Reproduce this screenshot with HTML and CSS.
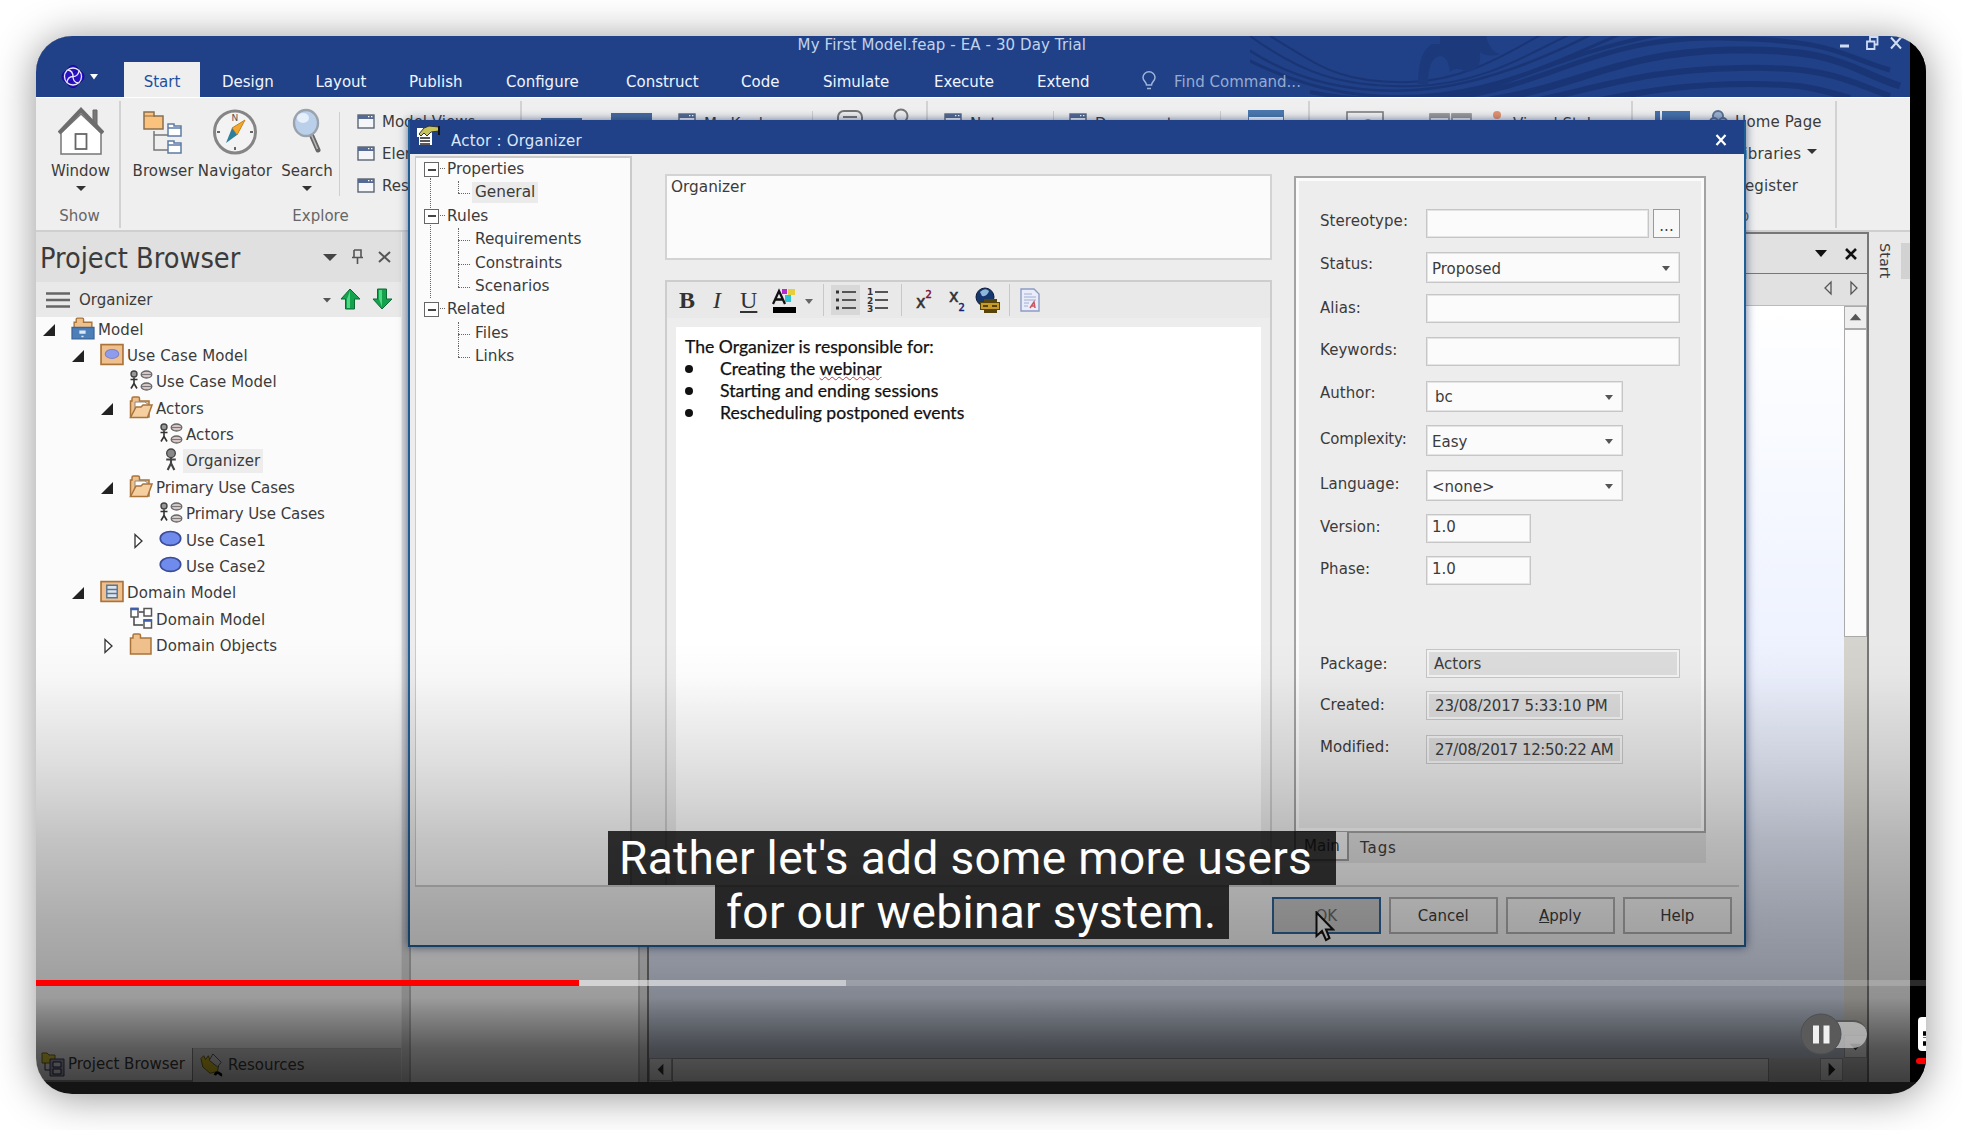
FILE: index.html
```html
<!DOCTYPE html>
<html lang="en">
<head>
<meta charset="utf-8">
<title>My First Model.feap - EA - 30 Day Trial</title>
<link rel="stylesheet" href="styles.css">
</head>
<body>
<svg class="defs" width="0" height="0">
  <symbol id="i-win" viewBox="0 0 18 15"><rect x="1" y="1" width="16" height="13" fill="#f4f6fa" stroke="#5d6573" stroke-width="1.4"/><rect x="1" y="1" width="16" height="4" fill="#546a92"/><path d="M11 2.6h1.4M14 2.6h1.4" stroke="#fff" stroke-width="1.4"/></symbol>
  <symbol id="i-open" viewBox="0 0 12 12"><path d="M0 12L12 0V12Z" fill="#222"/></symbol>
  <symbol id="i-closed" viewBox="0 0 12 16"><path d="M2 1.5V14.5L9 8Z" fill="#fff" stroke="#333" stroke-width="1.3"/></symbol>
  <symbol id="i-root" viewBox="0 0 23 22"><path d="M3 11V5H5V2Q5 1 6 1H11Q12 1 12 2V5H20V11Z" fill="#f0c08a" stroke="#a9743a" stroke-width="1.3"/><path d="M1 10H22V21H1Z" fill="#4c7fb8" stroke="#3a669b" stroke-width="1.3"/><path d="M8 13h6v3H8zM10 18h2v1.5h-2z" fill="#dfe9f5"/></symbol>
  <symbol id="i-ucm" viewBox="0 0 23 22"><rect x="1" y="1.5" width="21" height="19" fill="#efbf8e" stroke="#a9743a" stroke-width="1.6"/><ellipse cx="11.500" cy="10.500" rx="6.500" ry="4.300" fill="#8d9cec" stroke="#7d83c4"/></symbol>
  <symbol id="i-dom" viewBox="0 0 23 22"><rect x="1" y="1.500" width="21" height="19" fill="#efbf8e" stroke="#a9743a" stroke-width="1.6"/><path d="M6.500 5h10v12h-10zM6.500 9h10M6.500 13h10" fill="#dbe5f0" stroke="#5b7590" stroke-width="1.400"/></symbol>
  <symbol id="i-diag" viewBox="0 0 24 22"><circle cx="5" cy="4.500" r="3" fill="#999" stroke="#444" stroke-width="1.400"/><path d="M5 8V14M1.500 10H8.500M5 14L2 19M5 14L8 19" stroke="#333" stroke-width="1.600" fill="none"/><ellipse cx="17.500" cy="5" rx="5.300" ry="3.500" fill="#d5c5c5" stroke="#666" stroke-width="1.300"/><ellipse cx="17.500" cy="17" rx="5.300" ry="3.500" fill="#d5c5c5" stroke="#666" stroke-width="1.300"/><path d="M13 5h9M13 17h9" stroke="#777"/></symbol>
  <symbol id="i-fopen" viewBox="0 0 24 23"><path d="M1.500 21V5H3V2.500Q3 1 4.500 1H9Q10.500 1 10.500 2.500V5H20V21Z" fill="#efc08c" stroke="#a9743a" stroke-width="1.500"/><path d="M6 14V6H16L20 9V14Z" fill="#fff" stroke="#888"/><path d="M1.500 21.500L7 11H12L14 9H23L18.500 21.500Z" fill="#f5cfa0" stroke="#a9743a" stroke-width="1.500"/></symbol>
  <symbol id="i-folder" viewBox="0 0 24 23"><path d="M1.500 21V5H4V2.500Q4 1 5.500 1H10Q11.500 1 11.500 2.500V5H22V21Z" fill="#efc08c" stroke="#a9743a" stroke-width="1.500"/></symbol>
  <symbol id="i-actor" viewBox="0 0 24 24"><circle cx="12" cy="5.500" r="4.500" fill="#888" stroke="#444" stroke-width="1.400"/><path d="M12 10V17M7 12H17M12 16L8.500 23M12 16L15.500 23" stroke="#444" stroke-width="2.200" fill="none"/></symbol>
  <symbol id="i-uc" viewBox="0 0 23 22"><ellipse cx="11" cy="10" rx="9.800" ry="6.700" fill="#6f8cec" stroke="#3b4b98" stroke-width="1.600"/></symbol>
  <symbol id="i-class" viewBox="0 0 24 23"><path d="M5 10V18H14M10 5H15" stroke="#444" stroke-width="1.500" fill="none"/><path d="M2 1.500H9V10H2ZM15 1.500H22.500V9H15ZM15 13H22.500V21H15Z" fill="#fff" stroke="#555" stroke-width="1.500"/><path d="M1.500 2H9.500M14.500 13.500H23" stroke="#3e5fae" stroke-width="2.400"/></symbol>
</svg>

<div class="player">
<div class="app">
  <header class="titlebar">
    <svg class="waves" width="660" height="61" viewBox="0 0 660 61" fill="none" stroke="#1a3575">
      <path d="M20 0C70 30 90 48 160 46S280 0 310 -10" stroke-width="2"/>
      <path d="M0 0C50 36 90 52 165 50S290 10 330 -6" stroke-width="2"/>
      <path d="M-10 8C40 44 100 58 165 54S300 20 350 -6" stroke-width="2.500"/>
      <path d="M-10 20C60 56 120 66 190 58S320 20 375 -4" stroke-width="3"/>
      <path d="M60 56C120 68 200 66 260 44S350 10 420 -4" stroke-width="4"/>
      <path d="M200 62C300 50 350 0 470 2S590 20 640 34" stroke-width="5"/>
      <path d="M240 64C330 50 370 16 480 14S600 34 650 50" stroke-width="7"/>
      <path d="M280 66C370 46 400 34 490 32S600 46 640 60" stroke-width="6"/>
      <path d="M340 66C400 54 440 48 500 48S570 54 600 62" stroke-width="6"/>
      <path d="M168 48Q168 16 182 8H190V0H236Q240 16 250 18Q238 22 230 16Q232 34 218 36Q206 30 200 36Q198 20 190 20Q178 22 178 48Z" fill="#1c397c" stroke="none"/>
    </svg>
    <div class="caption-row">
      <span class="app-title">My First Model.feap - EA - 30 Day Trial</span>
      <svg class="winbtns" width="66" height="16" viewBox="0 0 66 16" fill="none" stroke="#cfdcf2"><path d="M1 11H10" stroke-width="3"/><path d="M28 6.500H35.500V14H28ZM31 6V2H38.500V9.500H36" stroke-width="1.800"/><path d="M52 2.500L62 13.500M62 2.500L52 13.500" stroke-width="2"/></svg>
    </div>
    <nav class="tabs">
      <span class="logo"><svg width="38" height="30" viewBox="0 0 38 30"><g fill="#2a12c4" stroke="#140a86"><circle cx="12" cy="9" r="5.500"/><circle cx="12" cy="20" r="5.500"/><circle cx="7" cy="14.500" r="6"/><circle cx="17" cy="14.500" r="6"/></g><g fill="none" stroke="#e9e6ff" stroke-width="1.300"><circle cx="12" cy="14.500" r="8.500"/><path d="M12 14.500Q12 9 7 8M12 14.500Q17 14.500 18 9M12 14.500Q12 20 17 21M12 14.500Q7 14.500 6 20"/></g><path d="M29 12H37L33 17.500Z" fill="#fff"/></svg></span>
      <span class="tab active">Start</span><span class="tab t2">Design</span><span class="tab t3">Layout</span><span class="tab t4">Publish</span><span class="tab t5">Configure</span><span class="tab t6">Construct</span><span class="tab t7">Code</span><span class="tab t8">Simulate</span><span class="tab t9">Execute</span><span class="tab t10">Extend</span>
      <svg class="bulb" width="14" height="20" viewBox="0 0 14 20" fill="none" stroke="#9fb4da" stroke-width="1.500"><path d="M4.500 14C4.500 11 1 10 1 6.500A6 5.700 0 0 1 13 6.500C13 10 9.500 11 9.500 14ZM5 17.500H9"/></svg>
      <span class="find">Find Command...</span>
    </nav>
  </header>

  <section class="ribbon">
    <div class="group g-show">
      <div class="big">
        <svg width="46" height="48" viewBox="0 0 46 48"><path d="M35 3H39V18L35 14Z" fill="#777" stroke="#666"/><path d="M3 26V47H43V26L23 7Z" fill="#fff" stroke="#777" stroke-width="1.500"/><path d="M1 26L23 3L45 26" fill="none" stroke="#6d6d6d" stroke-width="4"/><rect x="17.500" y="27" width="11" height="15" fill="#fff" stroke="#666" stroke-width="1.800"/></svg>
        <span>Window</span><i class="car"></i>
      </div>
      <span class="glabel">Show</span>
    </div>
    <div class="group g-explore">
      <div class="bigs">
        <div class="big b-browser"><svg width="42" height="48" viewBox="0 0 42 48"><path d="M12 24V43H26M12 28H26" fill="none" stroke="#777" stroke-width="1.500"/><path d="M2 22V5H12V9H21V22Z" fill="#fac27c" stroke="#8a6f4c" stroke-width="1.500"/><path d="M2 9H13" stroke="#8a6f4c"/><path d="M26 29V17H32V19H39V29ZM26 46V34H32V36H39V46Z" fill="#fff" stroke="#5d7ba6" stroke-width="1.500"/><path d="M26 21H39M26 38H39" stroke="#5d7ba6" stroke-width="1.500"/></svg><span>Browser</span></div>
        <div class="big b-nav"><svg width="46" height="48" viewBox="0 0 46 48"><ellipse cx="23" cy="25" rx="20.500" ry="21" fill="#f3f3f3" stroke="#858585" stroke-width="3"/><text x="23" y="14" font-size="9" text-anchor="middle" fill="#555">N</text><path d="M33 13L20 21L25 28Z" fill="#f0a830" stroke="#c98216"/><path d="M14 36L20 21L25 28Z" fill="#2d7f9c"/><path d="M5 25h3M38 25h3M23 40v3" stroke="#666" stroke-width="2"/></svg><span>Navigator</span></div>
        <div class="big b-search"><svg width="32" height="48" viewBox="0 0 32 48"><path d="M20 27L27 43" stroke="#666" stroke-width="5" stroke-linecap="round"/><path d="M20 27L26.500 42" stroke="#bbb" stroke-width="1.500"/><ellipse cx="15" cy="16" rx="12" ry="13" fill="#b9cfea" stroke="#9aa2ac" stroke-width="2.400"/><ellipse cx="12" cy="11" rx="6" ry="5" fill="#e6f0fa"/></svg><span>Search</span><i class="car"></i></div>
        <div class="smalls"><div><svg width="18" height="15"><use href="#i-win"/></svg>Model Views</div><div><svg width="18" height="15"><use href="#i-win"/></svg>Elements</div><div><svg width="18" height="15"><use href="#i-win"/></svg>Resources</div></div>
      </div>
      <span class="glabel">Explore</span>
    </div>
    <div class="group g-collab">
      <i class="bar b1"></i><i class="bar b2"></i>
      <svg width="18" height="15"><use href="#i-win"/></svg><span class="w-kanban">My Kanban</span><i class="vs"></i>
      <svg class="chat" width="26" height="24" viewBox="0 0 26 24" fill="none" stroke="#777" stroke-width="2"><rect x="1" y="2" width="24" height="17" rx="6"/><path d="M6 8H20M6 12H16"/></svg>
      <svg class="pin" width="16" height="24" viewBox="0 0 16 24" fill="none" stroke="#777" stroke-width="2"><circle cx="8" cy="8" r="6.500"/></svg>
    </div>
    <div class="group g-notes">
      <svg width="18" height="15"><use href="#i-win"/></svg><span class="w-notes">Notes</span><i class="vs"></i>
      <svg width="18" height="15"><use href="#i-win"/></svg><span class="w-doc">Document</span><i class="vs"></i>
      <svg class="form" width="36" height="24" viewBox="0 0 36 24"><rect x=".500" y=".500" width="35" height="23" fill="#fff" stroke="#5c7ea8"/><rect width="36" height="7" fill="#4a78ad"/></svg>
    </div>
    <div class="group g-desk">
      <svg width="38" height="24" viewBox="0 0 38 24"><rect x="1" y="1" width="36" height="22" fill="#f4f4f4" stroke="#777" stroke-width="1.500"/><circle cx="22" cy="12" r="4" fill="#999"/></svg>
      <svg class="panes" width="43" height="24" viewBox="0 0 43 24"><path d="M1 1H20V23H1ZM23 1H42V23H23Z" fill="#eee" stroke="#888" stroke-width="1.500"/><path d="M1 3H20M23 3H42" stroke="#999" stroke-width="4"/></svg>
      <i class="dot"></i><span>Visual Style</span>
    </div>
    <div class="group g-help">
      <svg class="book" width="35" height="24" viewBox="0 0 35 24"><path d="M0 0H5V24H0ZM7 0H35V24H7Z" fill="#4570aa"/></svg>
      <div class="smalls"><div><svg width="20" height="22" viewBox="0 0 20 22" fill="#9fb3cf" stroke="#5a7193" stroke-width="2"><circle cx="9" cy="6" r="5"/><circle cx="5" cy="12" r="4"/><circle cx="14" cy="12" r="4"/></svg>Home Page</div><div><svg width="20" height="15"></svg>Libraries<i class="car"></i></div><div><svg width="20" height="15"></svg>Register</div></div>
      <span class="glabel">Help</span>
    </div>
  </section>

  <main class="work">
    <aside class="browser">
      <div class="phead"><h1>Project Browser</h1><svg width="72" height="18" viewBox="0 0 72 18" fill="none" stroke="#555"><path d="M0 6H14L7 13Z" fill="#444" stroke="none"/><path d="M31 2H38V9.500M31 2V9.500M29 9.500H40M34.500 10V16" stroke-width="1.600"/><path d="M56 4L67 14M67 4L56 14" stroke-width="2"/></svg></div>
      <div class="pbar"><svg width="25" height="16" viewBox="0 0 25 16"><path d="M0 1.500H24M0 8H24M0 14.500H24" stroke="#666" stroke-width="2.400"/></svg><span>Organizer</span>
        <svg class="arrows" width="70" height="24" viewBox="0 0 70 24"><path d="M0 11H8L4 15.500Z" fill="#555"/><path d="M27 2L37 12H31.500V22H22.500V12H18Z" fill="#14a24c" stroke="#0c6b34"/><path d="M27 4V21H24V12Z" fill="#4fd884"/><path d="M59 22L69 12H63.500V2H54.500V12H50Z" fill="#14a24c" stroke="#0c6b34"/><path d="M59 20V3H56V12Z" fill="#4fd884"/></svg></div>
      <div class="tree">
        <div class="row l0"><svg class="ex"><use href="#i-open"/></svg><svg class="ic"><use href="#i-root"/></svg><span>Model</span></div>
        <div class="row l1"><svg class="ex"><use href="#i-open"/></svg><svg class="ic"><use href="#i-ucm"/></svg><span>Use Case Model</span></div>
        <div class="row l2"><svg class="ex"></svg><svg class="ic"><use href="#i-diag"/></svg><span>Use Case Model</span></div>
        <div class="row l2"><svg class="ex"><use href="#i-open"/></svg><svg class="ic"><use href="#i-fopen"/></svg><span>Actors</span></div>
        <div class="row l3"><svg class="ex"></svg><svg class="ic"><use href="#i-diag"/></svg><span>Actors</span></div>
        <div class="row l3"><svg class="ex"></svg><svg class="ic"><use href="#i-actor"/></svg><span class="sel">Organizer</span></div>
        <div class="row l2"><svg class="ex"><use href="#i-open"/></svg><svg class="ic"><use href="#i-fopen"/></svg><span class="nar">Primary Use Cases</span></div>
        <div class="row l3"><svg class="ex"></svg><svg class="ic"><use href="#i-diag"/></svg><span class="nar">Primary Use Cases</span></div>
        <div class="row l3"><svg class="ex tall"><use href="#i-closed"/></svg><svg class="ic"><use href="#i-uc"/></svg><span>Use Case1</span></div>
        <div class="row l3"><svg class="ex"></svg><svg class="ic"><use href="#i-uc"/></svg><span>Use Case2</span></div>
        <div class="row l1"><svg class="ex"><use href="#i-open"/></svg><svg class="ic"><use href="#i-dom"/></svg><span>Domain Model</span></div>
        <div class="row l2"><svg class="ex"></svg><svg class="ic"><use href="#i-class"/></svg><span>Domain Model</span></div>
        <div class="row l2"><svg class="ex tall"><use href="#i-closed"/></svg><svg class="ic"><use href="#i-folder"/></svg><span>Domain Objects</span></div>
      </div>
      <div class="ptabs">
        <div class="ptab on"><svg width="24" height="26" viewBox="0 0 24 26"><path d="M1 12V2H6L8 4H14V12Z" fill="#e8d83c" stroke="#76701e"/><path d="M4 12V19H9" fill="none" stroke="#333"/><path d="M9 8H23V25H9Z" fill="#aab" stroke="#447"/><path d="M12 11H20V16H12ZM12 18H20V23H12Z" fill="#eee" stroke="#225"/></svg>Project Browser</div>
        <div class="ptab"><svg width="24" height="26" viewBox="0 0 26 26"><path d="M1 6L4 3L6 7L9 3L11 8L20 14L19 20L11 22L3 15Z" fill="#d8c020" stroke="#665a10"/><path d="M14 1L23 10L19 15L10 8Z" fill="#ddd" stroke="#555"/><path d="M16 24C19 18 22 24 24 24" stroke="#000" stroke-width="3" fill="none"/></svg>Resources</div>
      </div>
    </aside>
    <div class="split"></div>
    <div class="mid"></div>
    <div class="split two"></div>
    <section class="doc">
      <div class="dochead"><svg width="46" height="16" viewBox="0 0 46 16"><path d="M0 4H12L6 11Z" fill="#111"/><path d="M31 3L41 13M41 3L31 13" stroke="#111" stroke-width="2.600"/></svg></div>
      <div class="docnav"><svg width="34" height="16" viewBox="0 0 34 16" fill="none" stroke="#555" stroke-width="1.300"><path d="M7 2V14L1 8ZM27 2V14L33 8Z"/></svg></div>
      <div class="canvas"><div class="sheet"></div>
        <div class="vbar"><svg class="sbtn" viewBox="0 0 22 22"><path d="M5 14H17L11 7Z" fill="#555"/></svg><div class="vthumb"></div><svg class="sbtn end" viewBox="0 0 22 22"><path d="M5 8H17L11 15Z" fill="#333"/></svg></div></div>
      <div class="hbar"><svg class="sbtn" viewBox="0 0 22 22"><path d="M14 5V17L8 11Z" fill="#333"/></svg><div class="hthumb"></div><svg class="sbtn end" viewBox="0 0 22 22"><path d="M8 4V18L15 11Z" fill="#222"/></svg></div>
    </section>
    <aside class="rail"><span>Start</span><i></i></aside>
  </main>
</div>

<div class="dialog">
  <div class="dtitle"><svg width="24" height="22" viewBox="0 0 24 22"><path d="M1 3H16V20H3V12H1Z" fill="#fff"/><path d="M3 9L8 3L13 1L23 2V6L15 7L11 11L8 8L5 11Z" fill="#c8c45a" stroke="#333"/><path d="M4 13H14M4 16H14M4 19H14" stroke="#222" stroke-width="1.400"/><path d="M23 1V10" stroke="#111" stroke-width="2"/></svg><span>Actor : Organizer</span><svg class="dclose" width="14" height="14" viewBox="0 0 14 14"><path d="M2.500 2L11.500 12M11.500 2L2.500 12" stroke="#fff" stroke-width="2.200"/></svg></div>
  <div class="dbody">
    <div class="dtree">
      <div class="p">Properties</div><div class="c only"><b>General</b></div>
      <div class="p">Rules</div><div class="c">Requirements</div><div class="c">Constraints</div><div class="c last">Scenarios</div>
      <div class="p">Related</div><div class="c">Files</div><div class="c last">Links</div>
    </div>
    <div class="dmain">
      <div class="namebox">Organizer</div>
      <div class="editor">
        <div class="etools">
          <span class="eb">B</span><span class="ei">I</span><span class="eu">U</span>
          <svg class="ecolor" width="26" height="26" viewBox="0 0 26 26"><path d="M1 17L7 4L13 17M3.500 12.500H10.500" fill="none" stroke="#111" stroke-width="2.300"/><path d="M10 2H15V7H10Z" fill="#b42bd0"/><path d="M16 2H23V8H16Z" fill="#e6cf3c"/><path d="M13 8H19V15H13Z" fill="#2bc5d8"/><path d="M1 20H24V26H1Z" fill="#000"/></svg>
          <i class="ecar"></i><i class="es"></i>
          <span class="elist"><svg width="20" height="20" viewBox="0 0 20 20"><path d="M0 2H3M0 10H3M0 18H3" stroke="#333" stroke-width="3"/><path d="M6 2H20M6 10H20M6 18H20" stroke="#555" stroke-width="1.800"/></svg></span>
          <svg class="enum" width="22" height="26" viewBox="0 0 22 26"><path d="M8 5H21M8 13H21M8 21H21" stroke="#555" stroke-width="1.800"/><g font-size="9" font-weight="bold" fill="#333"><text x="0" y="8">1</text><text x="0" y="16.500">2</text><text x="0" y="25">3</text></g></svg>
          <i class="es"></i>
          <span class="ex2">x<sup>2</sup></span><span class="exs">x<sub>2</sub></span>
          <svg class="eglobe" width="26" height="26" viewBox="0 0 26 26"><circle cx="10" cy="10" r="9" fill="#16386f" stroke="#0c1c3c"/><path d="M5 5Q10 0 14 4Q12 10 7 9Z" fill="#8fb7dc"/><path d="M7 17H16V21H7ZM14 17H23V21H14ZM11 14H20V24H11Z" fill="none" stroke="#57430c" stroke-width="4"/><path d="M7 17H16V21H7ZM14 17H23V21H14Z" fill="none" stroke="#c79b28" stroke-width="2"/></svg>
          <i class="es"></i>
          <svg width="20" height="24" viewBox="0 0 20 24"><path d="M1 1H14L19 6V23H1Z" fill="#e9edfa" stroke="#8d9ac4" stroke-width="1.400"/><path d="M4 6H12M4 9H16M4 12H16M4 15H9M4 18H8" stroke="#a2add2"/><path d="M10 20L14 14L15 20M11.500 18H15" fill="none" stroke="#cc5560" stroke-width="1.500"/></svg>
        </div>
        <div class="etext"><p>The Organizer is responsible for:</p><ul><li>Creating the <u>webinar</u></li><li>Starting and ending sessions</li><li>Rescheduling postponed events</li></ul></div>
      </div>
    </div>
    <div class="dprops">
      <div class="pane">
        <div class="f h43 hi"><label>Stereotype:</label><div class="in st"></div><div class="dots">...</div></div>
        <div class="f h42 hi"><label>Status:</label><div class="in cb">Proposed</div></div>
        <div class="f h43 lo"><label>Alias:</label><div class="in"></div></div>
        <div class="f h44"><label>Keywords:</label><div class="in"></div></div>
        <div class="f h44 hi"><label>Author:</label><div class="in cb md ind">bc</div></div>
        <div class="f h45 lo"><label class="cx">Complexity:</label><div class="in cb md">Easy</div></div>
        <div class="f h44 lo"><label>Language:</label><div class="in cb md">&lt;none&gt;</div></div>
        <div class="f h42"><label>Version:</label><div class="in sm">1.0</div></div>
        <div class="f h93"><label>Phase:</label><div class="in sm">1.0</div></div>
        <div class="f h42 lo2"><label>Package:</label><div class="in ro">Actors</div></div>
        <div class="f h44 lo"><label>Created:</label><div class="in ro md tight">23/08/2017 5:33:10 PM</div></div>
        <div class="f h44 hi"><label>Modified:</label><div class="in ro md tight">27/08/2017 12:50:22 AM</div></div>
      </div>
      <div class="btabs"><span class="on">Main</span><span class="off">Tags</span></div>
    </div>
  </div>
  <div class="dfoot"><span class="btn ok">OK</span><span class="btn">Cancel</span><span class="btn"><u>A</u>pply</span><span class="btn">Help</span></div>
</div>
<svg class="cursor" width="20" height="32" viewBox="0 0 20 32"><path d="M1.500 1.500V25L7 20L11 29L14.500 27L11 18.500H18Z" fill="#e8e8e8" stroke="#111" stroke-width="2"/></svg>

<div class="shade"></div>
<div class="progress"><i class="loaded"></i><i class="played"></i></div>
<div class="toggle"><i></i><svg width="42" height="42" viewBox="0 0 42 42"><circle cx="21" cy="21" r="20" fill="#5a5a5a" stroke="#4d4f52"/><path d="M16 12.500V30.500M26.500 12.500V30.500" stroke="#f1f1f1" stroke-width="6"/></svg></div>
<svg class="cc" width="12" height="50" viewBox="0 0 12 50"><rect x="4" y="1" width="30" height="34" rx="4" fill="#fff"/><path d="M9 17.500H12M9 27.500H12" stroke="#000" stroke-width="4.500"/><path d="M9 21.500H12" stroke="#777" stroke-width="1"/><rect x="2" y="42" width="30" height="6" rx="3" fill="#f00"/></svg>
<div class="captions"><span class="c1">Rather let's add some more users</span><span class="c2">for our webinar system.</span></div>
</div>
</body>
</html>
```
FILE: styles.css
```css
* { box-sizing: border-box; }
body { margin: 0; width: 1962px; height: 1130px; background: #fff; overflow: hidden; font: 15px/20px "DejaVu Sans", sans-serif; color: #3b3b3b; padding: 36px; }
.defs { position: absolute; }
svg { flex: none; display: block; }
.player { position: relative; width: 1890px; height: 1058px; background: #141414; border-radius: 36px; overflow: hidden; }
body::before { content: ""; position: absolute; left: 36px; top: 36px; width: 1890px; height: 1058px; border-radius: 36px; box-shadow: 0 3px 42px rgba(0,0,0,.42); }
.player::before { content: ""; position: absolute; right: 0; top: 0; width: 16px; height: 1046px; background: #000; }
.app { width: 1874px; height: 1046px; display: flex; flex-direction: column; background: #efefef; }

.titlebar { height: 61px; background: #204187; position: relative; flex: none; overflow: hidden; }
.waves { position: absolute; left: 1214px; top: 0; }
.caption-row { height: 26px; position: relative; display: flex; justify-content: flex-end; padding-right: 5px; }
.winbtns { margin-top: -1px; }
.app-title { margin-right: 753px; line-height: 18px; letter-spacing: .1px; color: #c3d3ec; white-space: nowrap; }
.tabs { position: relative; display: flex; height: 35px; color: #f0f5ff; line-height: 40px; white-space: nowrap; }
.logo { width: 88px; padding-left: 25px; }
.tab { flex: none; }
.tab.active { width: 76px; text-align: center; background: #efefef; color: #1f4fa0; margin-right: 22px; }
.t2, .t3 { width: 93.5px; }
.t4 { width: 97px; }
.t5 { width: 120px; }
.t6 { width: 115px; }
.t7 { width: 82px; }
.t8 { width: 111px; }
.t9 { width: 103px; }
.t10 { width: 105px; }
.bulb { margin: 9px 18px 0 0; }
.find { color: #96abd2; }

.ribbon { height: 135px; flex: none; display: flex; background: #efefef; border-top: 1px solid #fff; border-bottom: 2px solid #cfcfcf; white-space: nowrap; }
.group { position: relative; border-right: 2px solid #d2d2d2; margin-top: 3px; height: 127px; display: flex; flex: none; }
.g-show, .g-explore, .g-help { padding-bottom: 24px; }
.glabel { position: absolute; bottom: 2px; left: 0; right: 0; text-align: center; color: #666; }
.g-show .glabel { left: 4px; }
.big { display: flex; flex-direction: column; align-items: center; padding-top: 6px; }
.big span { margin-top: 6px; }
.car { border: 5px solid transparent; border-top: 5px solid #333; border-bottom: 0; margin-top: 5px; width: 0; }
.g-show { width: 85px; justify-content: center; padding-left: 6px; }
.g-explore { width: 401px; }
.bigs { display: flex; padding-left: 10px; }
.b-browser { width: 64px; }
.b-nav { width: 80px; letter-spacing: .1px; }
.b-search { width: 64px; }
.smalls { height: 84px; padding-left: 17px; border-left: 1px solid #cfcfcf; display: flex; flex-direction: column; gap: 12px; margin-top: 11px; }
.smalls div { display: flex; align-items: center; gap: 7px; height: 20px; }
.smalls svg { margin-top: -2px; }
.vs { width: 1px; height: 84px; background: #cfcfcf; margin-top: 10px; }
.g-collab, .g-notes, .g-desk { padding-top: 0; }
.g-collab > svg, .g-notes > svg { margin-top: 12px; }
.g-collab span, .g-notes span, .g-desk span { padding: 13px 0 0 8px; }
.bar { width: 41px; height: 20px; background: #44699f; }
.b1 { margin: 17px 0 0 19px; }
.b2 { margin: 12px 26px 0 29px; }
.w-kanban { width: 116px; }
.g-collab .chat { margin: 8px 0 0 24px; }
.g-collab .pin { margin: 7px 0 0 30px; }
.g-collab { width: 406px; }
.g-notes { width: 382px; padding-left: 16px; }
.w-notes { width: 91px; }
.vs + svg { margin-left: 15px; }
.w-doc { width: 133px; }
.g-notes .form { margin: 9px 0 0 27px; }
.g-desk { width: 323px; padding-left: 36px; }
.g-desk svg { margin-top: 10px; }
.g-desk .panes { margin: 12px 0 0 45px; }
.dot { width: 8px; height: 8px; border-radius: 4px; background: #e5936d; margin: 10px 0 0 21px; }
.g-desk span { padding-left: 12px; }
.g-help { width: 204px; padding-left: 22px; }
.g-help .book { margin-top: 10px; }
.g-help .smalls { border: 0; padding-left: 19px; letter-spacing: .15px; }
.g-help .smalls div { gap: 6px; }
.g-help .car { margin: -5px 0 0 0; }
.g-help .glabel { right: auto; left: 82px; }

.work { flex: 1; display: flex; min-height: 0; }
.browser { width: 365px; display: flex; flex-direction: column; background: #fbfbfb; flex: none; }
.phead { height: 50px; background: #e0e0e0; display: flex; justify-content: space-between; align-items: center; padding: 0 6px 0 4px; flex: none; }
h1 { margin: 0; font: 28.6px/52px "DejaVu Sans Condensed", "DejaVu Sans", sans-serif; font-stretch: condensed; padding-top: 1px; }
.pbar { height: 35px; background: #e9e9e9; display: flex; align-items: center; padding-left: 10px; flex: none; }
.pbar span { margin-left: 8px; flex: 1; }
.arrows { margin: -2px 8px 0 0; }
.tree { flex: 1; }
.row { display: flex; align-items: center; height: 26.360px; white-space: nowrap; padding-left: 7px; position: relative; top: -.5px; }
.l1 { padding-left: 36px; }
.l2 { padding-left: 65px; }
.l3 { padding-left: 95px; }
.ex { width: 12px; height: 12px; margin-right: 16px; }
.ex.tall { height: 16px; margin: 0 14px 0 2px; }
.ic { width: 24px; height: 23px; margin: -3px 3px 0 0; }
.row span { letter-spacing: .1px; }
.row .nar { letter-spacing: -.07px; }
.row .sel { background: #ededed; padding: 2px 3px; margin-left: -3px; }
.ptabs { height: 34px; display: flex; background: #d9d9d9; flex: none; border-top: 1px solid #ccc; }
.ptab { display: flex; align-items: center; gap: 4px; padding: 0 0 2px 7px; width: 150px; white-space: nowrap; font-size: 15px; }
.ptab.on { width: 157px; padding: 0 0 0 5px; gap: 3px; background: #fbfbfb; border-right: 1px solid #888; border-bottom: 2px solid #999; margin-top: -1px; }
.split { width: 10px; background: #dcdcdc; border-right: 2px solid #bbb; border-left: 1px solid #eee; flex: none; }
.mid { width: 227px; background: #fbfbfb; flex: none; }
.split.two { width: 11px; border-left: 2px solid #bbb; border-right: 2px solid #777; }
.doc { width: 1220px; display: flex; flex-direction: column; border-right: 2px solid #777; border-top: 2px solid #777; flex: none; }
.dochead { height: 40px; background: #e1e1e1; border-bottom: 1px solid #777; display: flex; justify-content: flex-end; align-items: center; padding-right: 6px; flex: none; }
.docnav { height: 32px; background: #e1e1e1; border-bottom: 1px solid #bbb; display: flex; justify-content: flex-end; align-items: center; padding: 0 9px 3px 0; flex: none; }
.canvas { flex: 1; display: flex; }
.sheet { flex: 1; background: linear-gradient(#fff 0, #f5f8ff 200px, #eef2ff 340px, #d9e0f0 660px, #c4cddc 750px); }
.vbar { width: 23px; background: #d5d3cd; display: flex; flex-direction: column; }
.sbtn { width: 23px; height: 23px; background: #eee; border: 1px solid #aaa; }
.end { margin-top: auto; }
.vthumb { height: 308px; background: #fbfbfb; border: 1px solid #aaa; }
.hbar { height: 24px; background: #c5c5c5; display: flex; flex: none; padding-right: 24px; }
.hthumb { width: 1097px; border: 1px solid #999; background: #ebebeb; }
.hbar .end { margin: 0 0 0 auto; }
.rail { flex: 1; background: #e9e9e9; display: flex; justify-content: space-between; padding-top: 11px; }
.rail span { writing-mode: vertical-rl; margin-left: 5px; line-height: 22px; font-size: 14.500px; }
.rail i { width: 9px; height: 36px; background: #d2d2d2; }

.dialog { position: absolute; left: 372px; top: 84px; width: 1338px; height: 827px; background: #eeeded; border: 2px solid #1f5e95; border-top-color: #204187; box-shadow: 0 0 9px rgba(20,40,90,.65); display: flex; flex-direction: column; }
.dtitle { height: 32px; background: #204187; color: #dbe7fa; display: flex; align-items: center; padding-left: 6px; flex: none; }
.dtitle > svg:first-child { margin-top: -5px; }
.dtitle span { margin-left: 11px; flex: 1; padding-top: 6px; letter-spacing: .2px; }
.dclose { margin: 3px 16px 0 0; }
.dbody { display: flex; height: 733px; margin: 0 5px; border-bottom: 2px solid #c9c9c9; padding-top: 2px; flex: none; }
.dtree { width: 217px; border: 1px solid #cacaca; border-width: 2px 2px 0 1px; background: #fbfbfb; position: relative; font-size: 15.300px; line-height: 23.440px; }
.dtree::before { content: ""; position: absolute; left: 14px; top: 20px; height: 120px; border-left: 1px dotted #666; }
.dtree div { position: relative; height: 23.400px; }
.p { padding-left: 31px; }
.p::before { content: ""; position: absolute; left: 8px; top: 4px; width: 13px; height: 13px; border: 1.500px solid #666; background: linear-gradient(#444,#444) center/8px 2px no-repeat #fff; }
.p::after { content: ""; position: absolute; left: 22px; top: 10px; width: 7px; border-top: 1px dotted #666; }
.c { padding-left: 59px; }
.c::before { content: ""; position: absolute; left: 42px; top: 12px; width: 12px; border-top: 1px dotted #666; }
.c::after { content: ""; position: absolute; left: 42px; top: 0; height: 24px; border-left: 1px dotted #666; }
.c.last::after, .c.only::after { height: 12px; }
.c b { font-weight: normal; background: #ebebeb; margin-left: -3px; padding: 1px 3px 2px; }
.dmain { width: 607px; margin: 18px 0 0 33px; display: flex; flex-direction: column; }
.namebox { height: 86px; border: 2px solid #d3d3d3; background: #fbfbfb; padding-left: 4px; line-height: 22px; font-size: 15.300px; flex: none; }
.editor { margin-top: 20px; flex: 1; border: 2px solid #cdcdcd; border-bottom: 0; padding: 0 9px; display: flex; flex-direction: column; }
.etools { height: 36px; background: #e9e9e9; margin: 0 -9px; padding-left: 12px; display: flex; align-items: center; flex: none; font-family: "Liberation Serif", serif; color: #333; }
.eb, .ei, .eu { font-size: 24px; line-height: 34px; }
.eb { font-weight: bold; width: 34px; }
.ei { font-style: italic; width: 27px; }
.eu { text-decoration: underline; text-underline-offset: 3px; width: 32px; }
.ecar { border: 4px solid transparent; border-top: 5px solid #666; border-bottom: 0; margin: 2px 10px 0 7px; }
.es { width: 1px; height: 32px; background: #c8c8c8; }
.elist { background: #d8d8d8; margin: 0 7px; height: 30px; width: 29px; padding: 5px 0 0 5px; }
.enum { margin-right: 12px; font-family: "DejaVu Sans", sans-serif; }
.ex2, .exs { font: 18px/28px "DejaVu Sans Condensed", "DejaVu Sans", sans-serif; -webkit-text-stroke: .5px; color: #333; width: 33px; }
.ex2 { margin-left: 14px; padding-top: 3px; }
.exs { width: 26px; margin-top: -9px; }
sup, sub { font-size: 11px; line-height: 0; color: #7d1434; }
sup { vertical-align: 10px; }
sub { color: #1d1f75; vertical-align: -9px; }
.eglobe { margin-right: 8px; }
.es + svg:last-child { margin-left: 10px; }
.etext { flex: 1; background: #fff; margin-top: 9px; padding: 9px 9px 0; font: 17.600px/22px Lato, sans-serif; color: #111; -webkit-text-stroke: .25px #111; }
.etext p { margin: 0; }
.etext ul { margin: 0; padding: 0; list-style: none; }
.etext li { padding-left: 35px; position: relative; }
.etext li::before { content: ""; position: absolute; left: 0; top: 7px; width: 8px; height: 8px; border-radius: 4px; background: #111; }
.etext u { text-decoration: underline wavy #b93a48 1px; text-underline-offset: 1px; }

.dprops { width: 412px; margin: 20px 0 0 22px; }
.pane { height: 657px; border: 2px solid #a3a3a3; box-shadow: inset 0 0 0 3px #fbfbfb; padding: 31px 0 0 24px; }
.f { display: flex; align-items: flex-start; }
.f label { width: 106px; line-height: 26px; letter-spacing: .05px; }
.f .cx { letter-spacing: -.2px; }
.hi label { line-height: 25px; }
.lo label { line-height: 28px; }
.lo2 label { line-height: 31px; }
.h42 { height: 42px; } .h43 { height: 43px; } .h44 { height: 44px; } .h45 { height: 45px; } .h93 { height: 93px; }
.in { width: 254px; height: 29px; border: 1px solid #c6c6c6; box-shadow: inset 0 0 0 1px #e4e4e4; background: #fbfbfb; padding-left: 5px; line-height: 24px; white-space: nowrap; }
.st { width: 223px; }
.dots { width: 27px; height: 29px; border: 1px solid #999; background: #f8f8f8; margin-left: 4px; line-height: 32px; text-align: center; }
.cb { height: 31px; line-height: 32px; position: relative; }
.cb::after { content: ""; position: absolute; right: 9px; top: 13px; border: 4px solid transparent; border-top: 5px solid #555; border-bottom: 0; }
.ind { padding-left: 8px; line-height: 30px; }
.md { width: 197px; }
.sm { width: 105px; }
.ro { background: #dcdcdc; box-shadow: inset 0 0 0 2px #f3f3f3; padding-left: 7px; line-height: 28px; }
.tight { letter-spacing: -.15px; }
.tight.md { padding-left: 8px; }
.h44.hi .tight { letter-spacing: -.38px; }
.btabs { display: flex; background: #ddd; height: 30px; width: 412px; }
.btabs span { padding: 4px 9px; }
.btabs .on { background: #eee; width: 55px; border: 2px solid #999; border-top: 0; height: 29px; margin-top: -1px; padding: 4px 8px; }
.btabs .off { padding-left: 11px; letter-spacing: .9px; padding-top: 5px; }
.dfoot { display: flex; justify-content: flex-end; gap: 7.500px; padding: 10px 12px 0 0; }
.btn { width: 109.500px; height: 37px; border: 2px solid #aaa; text-align: center; line-height: 35px; background: #f0f0f0; }
.btn.ok { background: #c4c4c4; border-color: #2e6195; color: #666; }
.cursor { position: absolute; left: 1279px; top: 875px; }

.shade { position: absolute; left: 0; top: 0; width: 1874px; height: 1046px; background: linear-gradient(rgba(0,0,0,0) 605px, rgba(0,0,0,.015) 640px, rgba(0,0,0,.055) 672px, rgba(0,0,0,.11) 722px, rgba(0,0,0,.165) 764px, rgba(0,0,0,.225) 804px, rgba(0,0,0,.265) 844px, rgba(0,0,0,.31) 884px, rgba(0,0,0,.345) 924px, rgba(0,0,0,.38) 962px, rgba(0,0,0,.47) 978px, rgba(0,0,0,.56) 996px, rgba(0,0,0,.64) 1012px, rgba(0,0,0,.73) 1044px); }
.progress { position: absolute; left: 0; top: 944px; width: 1890px; height: 6px; background: rgba(255,255,255,.17); }
.progress i { position: absolute; left: 0; top: 0; height: 6px; }
.loaded { width: 810px; background: rgba(255,255,255,.45); }
.played { width: 543px; background: #f00; }
.toggle { position: absolute; left: 1764px; top: 977px; width: 68px; height: 42px; }
.toggle i { position: absolute; left: 20px; top: 7px; width: 47px; height: 28px; border-radius: 14px; background: rgba(200,200,200,.75); border-top: 2px solid #555; }
.toggle svg { position: relative; }
.cc { position: absolute; left: 1878px; top: 980px; }
.captions { position: absolute; left: 572px; top: 795px; width: 728px; display: flex; flex-direction: column; align-items: flex-start; font: 46px/54px Roboto, sans-serif; letter-spacing: .35px; color: #fff; white-space: nowrap; }
.captions span { height: 54px; background: rgba(8,8,8,.81); padding-left: 11px; }
.c1 { width: 728px; }
.c2 { width: 514px; margin-left: 107px; }
```
